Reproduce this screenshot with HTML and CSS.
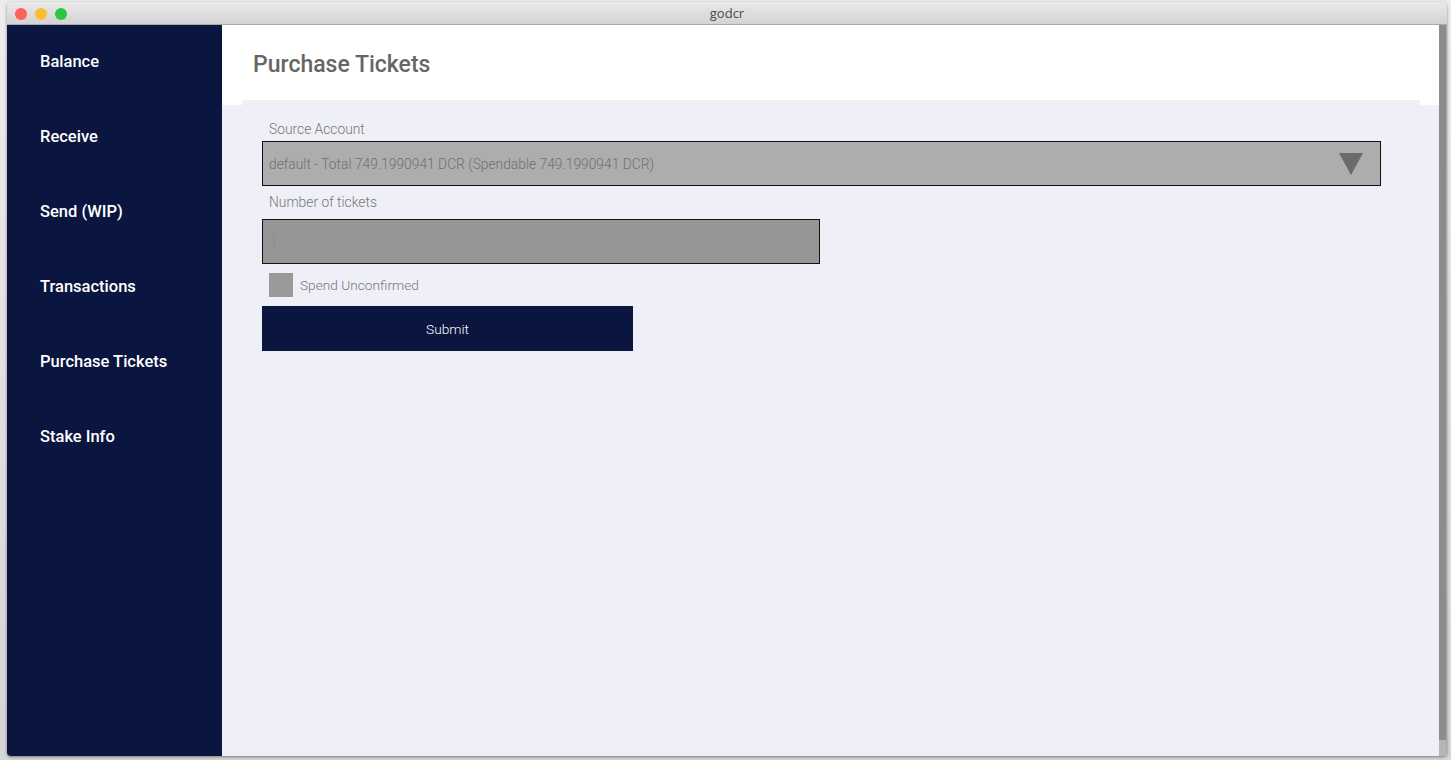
FILE: index.html
```html
<!DOCTYPE html>
<html lang="en">
<head>
    <meta charset="UTF-8">
    <title>godcr</title>
    <link rel="stylesheet" href="styles.css">
</head>
<body>

    <div class="window">
        <div class="titlebar">
            <div class="lights">
                <span class="light red"></span>
                <span class="light yellow"></span>
                <span class="light green"></span>
            </div>
            <div class="title">godcr</div>
        </div>

        <div class="app">
            <nav class="sidebar">
                <a class="nav-item">Balance</a>
                <a class="nav-item">Receive</a>
                <a class="nav-item">Send (WIP)</a>
                <a class="nav-item">Transactions</a>
                <a class="nav-item">Purchase Tickets</a>
                <a class="nav-item">Stake Info</a>
            </nav>

            <main class="main">
                <div class="header">
                    <h1>Purchase Tickets</h1>
                </div>
                <div class="header-edge"><div class="edge-fill"></div></div>

                <div class="content">
                    <div class="label">Source Account</div>
                    <div class="select">
                        <span>default - Total 749.1990941 DCR (Spendable 749.1990941 DCR)</span>
                        <svg class="arrow" width="24" height="22" viewBox="0 0 24 22">
                            <polygon points="0,0 24,0 12,22" fill="#6b6b6b"/>
                        </svg>
                    </div>

                    <div class="label">Number of tickets</div>
                    <div class="input">1</div>

                    <div class="check-row">
                        <span class="checkbox"></span>
                        <span class="check-label">Spend Unconfirmed</span>
                    </div>

                    <button class="submit">Submit</button>
                </div>
            </main>

            <div class="scrollbar">
                <div class="thumb"></div>
            </div>
        </div>
    </div>

</body>
</html>
```

FILE: styles.css
```css
* {
    margin: 0;
    padding: 0;
    box-sizing: border-box;
}

body {
    background: linear-gradient(#ececec, #d6d6d6);
    font-family: Roboto, "Liberation Sans", sans-serif;
    width: 1451px;
    height: 760px;
    padding: 2px 4px 4px 7px;
    overflow: hidden;
}

.window {
    width: 1440px;
    height: 754px;
    display: flex;
    flex-direction: column;
    border-radius: 5px 5px 4px 4px;
    overflow: hidden;
    box-shadow: 0 1px 3px rgba(0, 0, 0, 0.45);
}

.titlebar {
    height: 23px;
    position: relative;
    background: linear-gradient(#e9e9e9, #d3d3d3);
    border-bottom: 1px solid #a9a9a9;
    display: flex;
    align-items: center;
    justify-content: center;
}

.lights {
    position: absolute;
    left: 8px;
    top: 6px;
    display: flex;
    gap: 8px;
}

.light {
    width: 12px;
    height: 12px;
    border-radius: 50%;
}

.red { background-color: #fe5f57; }
.yellow { background-color: #febc2e; }
.green { background-color: #28c840; }

.title {
    font-family: "Open Sans", Roboto, sans-serif;
    font-size: 13px;
    color: #4a4a4a;
}

.app {
    flex: 1;
    display: flex;
}

.sidebar {
    width: 215px;
    background-color: #0a1540;
    display: flex;
    flex-direction: column;
    padding-top: 25px;
}

.nav-item {
    height: 75px;
    padding-left: 33px;
    color: #ffffff;
    font-size: 16.5px;
    font-weight: 500;
    line-height: 24px;
}

.main {
    flex: 1;
    background-color: #efeff8;
    display: flex;
    flex-direction: column;
}

.header {
    height: 75px;
    background-color: #ffffff;
    padding: 26px 0 0 31px;
}

h1 {
    font-size: 23px;
    font-weight: 500;
    color: #666666;
    line-height: 28px;
}

.header-edge {
    height: 5px;
    background-color: #ffffff;
    padding: 0 19px 0 20px;
}

.edge-fill {
    height: 5px;
    background-color: #efeff8;
}

.content {
    padding: 16px 58px 0 40px;
    display: flex;
    flex-direction: column;
    align-items: flex-start;
}

.label {
    font-size: 13.8px;
    font-weight: 300;
    color: #777777;
    padding-left: 7px;
    line-height: 16px;
    margin-bottom: 4px;
}

.select {
    width: 100%;
    height: 45px;
    background-color: #adadad;
    border: 1px solid #111111;
    display: flex;
    align-items: center;
    justify-content: space-between;
    padding: 0 17px 0 6px;
    font-size: 13.8px;
    font-weight: 300;
    color: #707070;
    margin-bottom: 8px;
}

.arrow {
    margin-top: 1px;
}

.input {
    width: 558px;
    height: 45px;
    background-color: #969696;
    border: 1px solid #111111;
    font-size: 13.8px;
    font-weight: 300;
    color: #8a8a8a;
    padding-left: 7px;
    line-height: 43px;
    margin-top: 5px;
}

.check-row {
    display: flex;
    align-items: center;
    gap: 7px;
    padding-left: 7px;
    margin-top: 9px;
}

.checkbox {
    width: 24px;
    height: 24px;
    background-color: #999999;
}

.check-label {
    font-size: 13.7px;
    font-weight: 300;
    color: #777777;
}

.submit {
    width: 371px;
    height: 45px;
    margin-top: 9px;
    background-color: #0a1540;
    border: none;
    color: #ffffff;
    font-family: Roboto, sans-serif;
    font-size: 13.7px;
    font-weight: 300;
}

.scrollbar {
    width: 8px;
    background-color: #b5b5b5;
    border-right: 1px solid #a8a8a8;
}

.thumb {
    height: 715px;
    background-color: #8c8c8c;
}
```
